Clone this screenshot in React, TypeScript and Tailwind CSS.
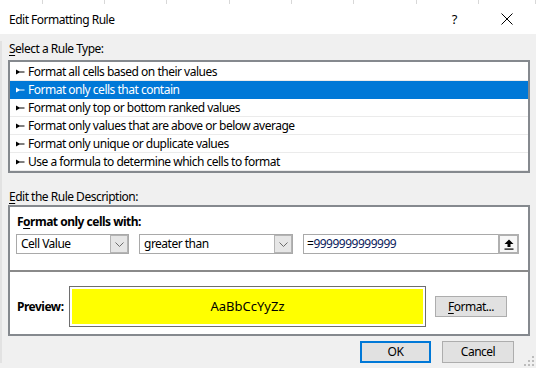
import React from "react";

const ruleTypes = [
  "Format all cells based on their values",
  "Format only cells that contain",
  "Format only top or bottom ranked values",
  "Format only values that are above or below average",
  "Format only unique or duplicate values",
  "Use a formula to determine which cells to format",
];

function RuleBullet({ color }: { color: string }) {
  return (
    <svg width="9" height="6" viewBox="0 0 9 6" className="mr-[3px] shrink-0">
      <path d="M0 0.5 L0 5.5 L3.5 3.6 L8.5 3.6 L8.5 2.4 L3.5 2.4 Z" fill={color} />
    </svg>
  );
}

function Chevron() {
  return (
    <svg width="9" height="5" viewBox="0 0 9 5">
      <path d="M0.5 0.5 L4.5 4.5 L8.5 0.5" fill="none" stroke="#6b6b6b" strokeWidth="1" />
    </svg>
  );
}

function Dropdown({ value, width }: { value: string; width: string }) {
  return (
    <div className={`${width} h-[20px] flex items-center border border-[#a9a9a9] bg-white`}>
      <span className="flex-1 pl-[4px] text-[12px] leading-[18px] text-black">{value}</span>
      <div className="w-[18px] h-[18px] flex items-center justify-center bg-[#e6e6e6] border border-[#b4b4b4]">
        <Chevron />
      </div>
    </div>
  );
}

export default function App() {
  const gridCols = [43, 62, 62, 63, 62, 62, 63, 62, 57];

  return (
    <div
      className="relative w-[536px] h-[368px] overflow-hidden bg-[#f0f0f0] text-[12px] tracking-[-0.5px] text-black"
      style={{ fontFamily: '"Noto Sans", "Open Sans", sans-serif' }}
    >
      {/* Excel grid behind the dialog */}
      <div className="flex h-[4px] bg-white">
        {gridCols.map((w, i) => (
          <div key={i} className="h-full border-r border-[#d8d8d8]" style={{ width: w }} />
        ))}
      </div>

      {/* Title bar */}
      <div className="flex h-[30px] items-center bg-white pl-[9px]">
        <span className="text-[12px] leading-[16px] pt-[1px]">Edit Formatting Rule</span>
        <span className="ml-auto mr-[44px] text-[13px] leading-[16px]">?</span>
        <svg width="12" height="12" viewBox="0 0 12 12" className="mr-[23px]">
          <path d="M0.5 0.5 L11.5 11.5 M11.5 0.5 L0.5 11.5" stroke="#000" strokeWidth="1" />
        </svg>
      </div>

      {/* Dialog body */}
      <div className="border-l-2 border-[#e2e2e2] pl-[6px] pr-[6px]">
        <div className="mt-[7px] h-[16px] pl-[1px] leading-[16px]">
          <span className="underline underline-offset-2">S</span>elect a Rule Type:
        </div>

        <div className="mt-[3px] border-2 border-[#85898e] bg-white pt-[1px]">
          {ruleTypes.map((t, i) => {
            const active = i === 1;
            return (
              <div
                key={t}
                className={`flex h-[18px] items-center pl-[6px] border-b ${
                  active ? "bg-[#0078d7] text-white border-[#0078d7]" : "border-[#ebebeb]"
                }`}
              >
                <RuleBullet color={active ? "#ffffff" : "#000000"} />
                <span className="leading-[16px]">{t}</span>
              </div>
            );
          })}
        </div>

        <div className="mt-[16px] h-[16px] pl-[1px] leading-[16px]">
          <span className="underline underline-offset-2">E</span>dit the Rule Description:
        </div>

        <div className="border-2 border-[#85898e] bg-white">
          <div className="pt-[7px] pb-[16px] pl-[6px] border-b-2 border-[#8a8a8a]">
            <div className="h-[16px] pl-[1px] font-bold leading-[16px]">
              F<span className="underline underline-offset-2">o</span>rmat only cells with:
            </div>
            <div className="mt-[4px] flex gap-[10px]">
              <Dropdown value="Cell Value" width="w-[113px]" />
              <Dropdown value="greater than" width="w-[154px]" />
              <div className="flex h-[20px] w-[216px] items-center border border-[#a9a9a9] bg-white">
                <span className="flex-1 pl-[3px] leading-[18px]">
                  =<span className="text-[#0a1a5c]">9999999999999</span>
                </span>
                <div className="flex h-[20px] w-[21px] items-center justify-center border-2 border-[#b0b0b0] bg-[#f7f7f7] -mr-[1px]">
                  <svg width="10" height="11" viewBox="0 0 10 11">
                    <path d="M5 0.5 L9.5 5 L6.5 5 L6.5 8 L3.5 8 L3.5 5 L0.5 5 Z" fill="#000" />
                    <rect x="0.5" y="9.5" width="9" height="1.2" fill="#000" />
                  </svg>
                </div>
              </div>
            </div>
          </div>

          <div className="flex items-center pt-[14px] pb-[7px] pl-[7px]">
            <div className="w-[52px] font-bold leading-[16px]">Preview:</div>
            <div className="h-[41px] w-[357px] border border-[#6e6e6e] bg-white p-[2px]">
              <div className="flex h-full w-full items-center justify-center bg-[#ffff00] text-[13px] tracking-normal">
                AaBbCcYyZz
              </div>
            </div>
            <button className="ml-[9px] h-[21px] w-[72px] border border-[#adadad] bg-[#e1e1e1] leading-[18px]">
              <span className="underline underline-offset-2">F</span>ormat...
            </button>
          </div>
        </div>

        <div className="mt-[5px] flex justify-end gap-[11px] pr-[16px]">
          <button className="h-[22px] w-[71px] border-2 border-[#0078d7] bg-[#e1e1e1] leading-[18px]">
            OK
          </button>
          <button className="h-[22px] w-[72px] border border-[#adadad] bg-[#e1e1e1] leading-[18px]">
            Cancel
          </button>
        </div>
      </div>

      {/* resize grip */}
      <svg width="10" height="10" viewBox="0 0 10 10" className="absolute right-[2px] bottom-[2px]">
        {[
          [8, 0],
          [8, 4],
          [4, 4],
          [8, 8],
          [4, 8],
          [0, 8],
        ].map(([x, y], i) => (
          <rect key={i} x={x} y={y} width="2" height="2" fill="#bcbcbc" />
        ))}
      </svg>
    </div>
  );
}
